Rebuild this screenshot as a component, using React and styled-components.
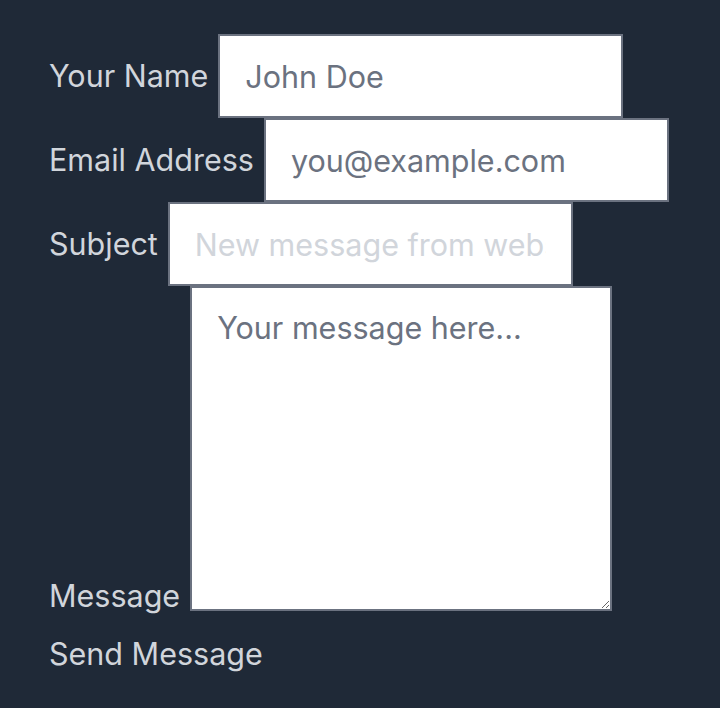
import React from 'react';
import styled, { createGlobalStyle } from 'styled-components';

const GlobalStyle = createGlobalStyle`
  html, body {
    margin: 0;
    padding: 0;
    background: #1f2937;
  }
  body {
    font-family: Inter, "Noto Sans", sans-serif;
  }
`;

const Page = styled.div`
  min-height: 708px;
  box-sizing: border-box;
  padding: 34px 0 0 49px;
  background: #1f2937;
`;

const Form = styled.form`
  display: flex;
  flex-direction: column;
  align-items: flex-start;
`;

const Row = styled.div`
  display: flex;
  align-items: ${({ $bottom }) => ($bottom ? 'flex-end' : 'center')};
  gap: 10px;
`;

const Label = styled.label`
  font-size: 30.5px;
  line-height: ${({ $bottom }) => ($bottom ? '30px' : '42px')};
  color: #d1d5db;
  white-space: nowrap;
`;

const Input = styled.input`
  box-sizing: border-box;
  width: 405px;
  height: 84px;
  margin: 0;
  padding: 0 25px;
  border: 2px solid #6b7280;
  border-radius: 0;
  background: #fff;
  font-family: inherit;
  font-size: 30.5px;
  color: #6b7280;
  outline: none;

  &::placeholder {
    color: #d1d5db;
    opacity: 1;
  }
`;

const TextArea = styled.textarea`
  box-sizing: border-box;
  width: 422px;
  height: 325px;
  margin: 0;
  padding: 16px 25px;
  border: 2px solid #6b7280;
  border-radius: 0;
  background: #fff;
  font-family: inherit;
  font-size: 30.5px;
  line-height: 48px;
  color: #6b7280;
  outline: none;

  &::placeholder {
    color: #6b7280;
    opacity: 1;
  }
`;

const SendButton = styled.button`
  margin-top: 22px;
  padding: 0;
  border: none;
  background: none;
  font-family: inherit;
  font-size: 30.5px;
  line-height: 42px;
  color: #d1d5db;
  cursor: pointer;
`;

const fields = [
  { id: 'name', label: 'Your Name', type: 'text', value: 'John Doe' },
  { id: 'email', label: 'Email Address', type: 'email', value: 'you@example.com' },
  { id: 'subject', label: 'Subject', type: 'text', placeholder: 'New message from website' },
];

const App = () => (
  <>
    <GlobalStyle />
    <Page>
      <Form onSubmit={(e) => e.preventDefault()}>
        {fields.map((f) => (
          <Row key={f.id}>
            <Label htmlFor={f.id}>{f.label}</Label>
            <Input
              id={f.id}
              type={f.type}
              defaultValue={f.value}
              placeholder={f.placeholder}
            />
          </Row>
        ))}
        <Row $bottom>
          <Label $bottom htmlFor="message">Message</Label>
          <TextArea id="message" placeholder="Your message here..." />
        </Row>
        <SendButton type="submit">Send Message</SendButton>
      </Form>
    </Page>
  </>
);

export default App;
